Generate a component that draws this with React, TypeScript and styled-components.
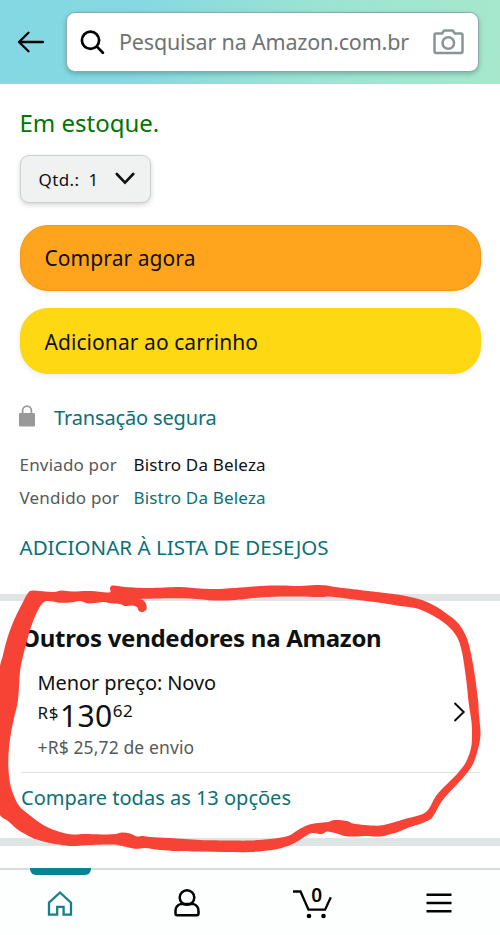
import React from 'react';
import styled, { createGlobalStyle } from 'styled-components';

const GlobalStyle = createGlobalStyle`
  * { box-sizing: border-box; }
  body { margin: 0; background: #fff; }
  button { font: inherit; border: 0; background: none; padding: 0; color: inherit; }
`;

const teal = '#0b7078';

const Screen = styled.div`
  position: relative;
  width: 500px;
  height: 935px;
  display: flex;
  flex-direction: column;
  overflow: hidden;
  background: #fff;
  color: #0f1111;
  font-family: 'Noto Sans', 'Open Sans', sans-serif;
  svg { display: block; flex: none; }
`;

const Header = styled.header`
  flex: none;
  height: 83.5px;
  display: flex;
  align-items: flex-start;
  padding: 12px 21.5px 0 17px;
  background: linear-gradient(100deg, #84d8e3 0%, #86d9e2 28%, #9be4d3 62%, #a7e8cd 100%);
`;

const BackButton = styled.button`
  display: flex;
  margin: 18px 21px 0 0;
`;

const SearchBox = styled.div`
  flex: 1;
  height: 60px;
  display: flex;
  align-items: center;
  padding: 0 14px 0 13px;
  border: 1px solid #8aa9ab;
  border-radius: 9px;
  background: #fff;
  box-shadow: 0 2px 5px rgba(15, 60, 60, 0.3);
`;

const SearchHint = styled.span`
  flex: 1;
  margin-left: 13px;
  font-size: 21.5px;
  line-height: 30px;
  letter-spacing: -0.18px;
  white-space: nowrap;
  color: #707373;
`;

const Purchase = styled.section`
  flex: none;
  height: 510.5px;
  padding: 24px 19.5px 0;
`;

const Stock = styled.p`
  margin: 0 0 17px;
  font-size: 24px;
  line-height: 30px;
  color: #007600;
`;

const Quantity = styled.button`
  width: 131.5px;
  height: 48.5px;
  display: flex;
  align-items: center;
  gap: 9px;
  padding: 1px 15.5px 0 18px;
  border: 1.5px solid #cdd0d0;
  border-radius: 9px;
  background: #f0f2f2;
  box-shadow: 0 2px 5px rgba(15, 17, 17, 0.18);
  font-size: 17px;
  letter-spacing: 0.4px;
  svg { margin: -1px 0 0 auto; }
`;

const Actions = styled.div`
  display: flex;
  flex-direction: column;
  gap: 17.5px;
  margin-top: 21.5px;
`;

const ActionButton = styled.button<{ $fill: string; $edge: string }>`
  height: 66px;
  padding: 1px 24px 0;
  text-align: left;
  border: 1.5px solid ${(p) => p.$edge};
  border-radius: 28px;
  background: ${(p) => p.$fill};
  box-shadow: 0 2px 5px rgba(213, 217, 217, 0.5);
  font-size: 21px;
  letter-spacing: 0.07px;
`;

const Secure = styled.div`
  display: flex;
  align-items: center;
  gap: 18px;
  height: 30px;
  margin-top: 28.5px;
  color: ${teal};
  font-size: 20px;
  letter-spacing: -0.15px;
  svg { margin: -3px 0 0 -0.5px; }
`;

const Facts = styled.dl`
  display: grid;
  grid-template-columns: 114px auto;
  grid-auto-rows: 33.2px;
  margin: 15.5px 0 0;
  font-size: 17px;
  line-height: 33px;
  letter-spacing: 0.18px;
`;

const FactName = styled.dt`
  color: #565959;
`;

const FactValue = styled.dd<{ $link?: boolean }>`
  margin: 0;
  color: ${(p) => (p.$link ? teal : '#0f1111')};
`;

const WishLink = styled.div`
  margin-top: 17.5px;
  font-size: 20.5px;
  line-height: 30px;
  letter-spacing: 0.03px;
  color: ${teal};
`;

const Divider = styled.div<{ $size: number }>`
  flex: none;
  height: ${(p) => p.$size}px;
  background: #e1e4e5;
`;

const Sellers = styled.section`
  flex: none;
  height: 237px;
  padding: 20.5px 20.5px 0 21px;
`;

const SellersTitle = styled.h2`
  margin: 0;
  font-size: 24px;
  font-weight: 700;
  line-height: 32px;
  letter-spacing: -0.27px;
`;

const Offer = styled.div`
  display: flex;
  align-items: center;
  justify-content: space-between;
  height: 119px;
  padding: 0 13.5px 0 16.5px;
  border-bottom: 1.5px solid #dfe2e2;
  svg { margin-top: -2px; }
`;

const OfferText = styled.div`
  display: flex;
  flex-direction: column;
  margin-top: 6px;
`;

const Condition = styled.span`
  font-size: 20px;
  line-height: 30px;
  letter-spacing: -0.1px;
`;

const Price = styled.span`
  display: flex;
  align-items: flex-start;
  height: 33px;
`;

const PriceSmall = styled.span<{ $raised?: boolean }>`
  font-size: 17px;
  line-height: ${(p) => (p.$raised ? 26 : 30)}px;
  letter-spacing: 0.6px;
`;

const PriceWhole = styled.span`
  margin-left: 1px;
  font-size: 30px;
  line-height: 35px;
  letter-spacing: 0.4px;
`;

const Shipping = styled.span`
  font-size: 17.5px;
  line-height: 33px;
  letter-spacing: 0.12px;
  color: #565959;
`;

const CompareLink = styled.div`
  margin-top: 10.5px;
  font-size: 20px;
  line-height: 30px;
  color: ${teal};
`;

const TabBar = styled.nav`
  flex: none;
  height: 67px;
  margin-top: auto;
  display: grid;
  grid-template-columns: 120.5px 133px 116px 1fr;
  border-top: 2px solid #d9dcdc;
  background: #fdfefe;
`;

const Tab = styled.button<{ $active?: boolean }>`
  display: flex;
  flex-direction: column;
  align-items: center;
  justify-content: flex-start;
  color: ${(p) => (p.$active ? '#15808c' : '#000')};
  &::before {
    content: '';
    width: 61.5px;
    height: 7px;
    margin: -2px 0 7px;
    border-radius: 0 0 6px 6px;
    background: ${(p) => (p.$active ? '#078296' : 'transparent')};
  }
  &:last-child { padding-left: 9px; }
`;

const CartCount = styled.text`
  font: 600 19px 'Noto Sans', sans-serif;
`;

const Marker = styled.svg`
  position: absolute;
  inset: 0;
  pointer-events: none;
`;

type Point = [number, number];

const markerOuter: Point[] = [
  [33, 590.5], [28, 593], [23, 602], [15, 618], [8, 636], [3, 655], [-1, 675], [-4, 740], [-3, 800], [0, 815],
  [8, 821], [17, 829], [25, 834], [35, 839], [50, 843], [62, 845], [73, 846], [90, 845], [112, 844.5],
  [120, 845.5], [135, 848.7], [145, 848], [160, 850], [175, 851], [200, 851.5], [225, 852], [250, 852],
  [272, 850], [288, 846], [298, 841], [305, 836.5], [312, 833], [322, 834], [327, 831.5], [335, 833],
  [345, 836], [355, 836.5], [367, 836], [375, 836.5], [384, 836], [391, 834], [398, 832], [410, 827],
  [420, 824], [430, 819.5], [434, 815], [440, 804], [446, 796], [453, 788.5], [461, 780], [470, 769],
  [475, 759], [479, 745], [480.5, 733], [479, 715], [478, 700], [474, 670], [469, 645], [464, 632],
  [457, 622], [447, 614], [435, 606], [422, 600], [408, 596.5], [400, 595], [385, 593], [360, 590],
  [335, 587], [327, 585.5], [315, 585], [300, 586], [280, 585.5], [260, 586], [235, 588], [215, 589],
  [200, 588.5], [180, 587], [150, 588], [125, 587], [113, 585.5], [110, 588], [109, 592.5], [90, 591],
  [72, 591.5], [62, 590.5], [54, 592], [45, 591.5],
];

const markerInner: Point[] = [
  [44, 602], [53, 601.5], [59, 602.7], [70, 602.5], [80, 601], [87, 603.3], [95, 603], [103, 602],
  [113, 603.5], [120, 604], [125, 606], [132, 605.5], [137, 607], [139, 611], [143, 612], [146.5, 609],
  [146, 604], [143, 600], [139, 599], [160, 598.5], [190, 598.5], [215, 600.5], [235, 600], [260, 597.5],
  [285, 596.5], [320, 597], [330, 596.5], [350, 599], [375, 602], [400, 606], [415, 608], [425, 611.5],
  [437, 618], [448, 626], [457, 637], [462, 652], [466, 678], [469, 705], [471.5, 722], [472, 735],
  [471, 748], [466, 762], [457, 774], [445, 786], [436, 796], [430, 807], [426, 812], [420, 815],
  [405, 819], [395, 822], [380, 825.5], [365, 825], [353, 823.5], [347, 821], [335, 820], [328, 822],
  [318, 823], [308, 825], [298, 830], [288, 836], [270, 839], [250, 840.5], [230, 840.5], [200, 840],
  [170, 838], [150, 837], [143, 836], [137, 836.5], [130, 833.5], [122, 832.5], [115, 834], [105, 834.5],
  [85, 834], [73, 834.5], [60, 832], [45, 826], [32, 817], [20, 807], [14, 796], [10, 783], [8.3, 765],
  [9, 748], [11, 733], [14, 718], [18, 700], [20, 672], [23, 656], [27, 641], [31, 627], [37, 612],
];

function smoothPath(points: Point[]) {
  const n = points.length;
  const at = (i: number) => points[(i + n) % n];
  let d = `M${at(0)[0]} ${at(0)[1]}`;
  for (let i = 0; i < n; i++) {
    const [a, b, c, e] = [at(i - 1), at(i), at(i + 1), at(i + 2)];
    d += `C${b[0] + (c[0] - a[0]) / 6} ${b[1] + (c[1] - a[1]) / 6} ${c[0] - (e[0] - b[0]) / 6} ${c[1] - (e[1] - b[1]) / 6} ${c[0]} ${c[1]}`;
  }
  return d + 'Z';
}

const BackIcon = () => (
  <svg width="28" height="24" viewBox="0 0 28 24" fill="none" stroke="#000" strokeWidth="2.3" strokeLinecap="round" strokeLinejoin="round">
    <path d="M26 12H2M11.5 2.7L2 12l9.5 9.3" />
  </svg>
);

const SearchIcon = () => (
  <svg width="26" height="26" viewBox="0 0 26 26" fill="none" stroke="#000" strokeWidth="2.7" strokeLinecap="round">
    <circle cx="10.5" cy="11.3" r="8.6" />
    <path d="M17.1 17.9L22.9 23.7" />
  </svg>
);

const CameraIcon = () => (
  <svg width="31" height="26" viewBox="0 0 31 26" fill="none" stroke="#899597" strokeWidth="2.5" strokeLinejoin="round">
    <path d="M3 4.4h6.2l1.5-2.4q.3-.5 1-.5h7.4q.7 0 1 .5l1.5 2.4H28q1.5 0 1.5 1.5v16.3q0 1.7-1.5 1.7H3q-1.5 0-1.5-1.7V5.9q0-1.5 1.5-1.5z" />
    <circle cx="15.3" cy="14" r="5.8" />
  </svg>
);

const LockIcon = () => (
  <svg width="17" height="22" viewBox="0 0 17 22" fill="none">
    <path d="M3.6 10V5.5a4.4 4.4 0 0 1 8.8 0V10" stroke="#999" strokeWidth="1.7" />
    <rect x="0" y="8" width="16" height="13.5" rx="1.3" fill="#999" />
  </svg>
);

const HomeIcon = () => (
  <svg width="28" height="42" viewBox="0 -7.4 28 42" fill="none" stroke="currentColor" strokeWidth="2.3">
    <path d="M3 13.3L14 3.1l11 10.2V25.3h-7.4v-7.9h-6.4v7.9H3z" />
  </svg>
);

const PersonIcon = () => (
  <svg width="28" height="42" viewBox="0 -6.5 28 42" fill="none" stroke="currentColor" strokeWidth="2.5">
    <circle cx="14" cy="9" r="7.3" />
    <path d="M8 15.4Q2.5 17 2.5 22.5V25q0 1.8 1.7 1.8h19.6q1.7 0 1.7-1.8v-2.5q0-5.5-5.5-7.1z" strokeLinejoin="round" />
  </svg>
);

const CartIcon = () => (
  <svg width="42" height="42" viewBox="0 -4.5 42 42" fill="none" stroke="currentColor" strokeWidth="2.3">
    <path d="M2 5h7.5l8 18.2h16.6L39.8 10.8" />
    <circle cx="18" cy="29.5" r="2.3" fill="currentColor" stroke="none" />
    <circle cx="32.5" cy="29.5" r="2.3" fill="currentColor" stroke="none" />
    <CartCount x="25.7" y="15.2" textAnchor="middle" fill="currentColor" stroke="none">0</CartCount>
  </svg>
);

const MenuIcon = () => (
  <svg width="26" height="42" viewBox="0 -5.5 26 42" stroke="currentColor" strokeWidth="2.5">
    <path d="M.5 7.2h25M.5 15.5h25M.5 23.8h25" />
  </svg>
);

export default function App() {
  return (
    <>
      <GlobalStyle />
      <Screen>
        <Header>
          <BackButton aria-label="Voltar"><BackIcon /></BackButton>
          <SearchBox>
            <SearchIcon />
            <SearchHint>Pesquisar na Amazon.com.br</SearchHint>
            <CameraIcon />
          </SearchBox>
        </Header>

        <Purchase>
          <Stock>Em estoque.</Stock>
          <Quantity>
            <span>Qtd.:</span>
            <span>1</span>
            <svg width="20" height="13" viewBox="0 0 20 13" fill="none" stroke="#0f1111" strokeWidth="2.6" strokeLinecap="round">
              <path d="M1.8 2L10 10.7 18.2 2" />
            </svg>
          </Quantity>
          <Actions>
            <ActionButton $fill="#ffa41c" $edge="#f79618">Comprar agora</ActionButton>
            <ActionButton $fill="#ffd814" $edge="#fcd612">Adicionar ao carrinho</ActionButton>
          </Actions>
          <Secure><LockIcon /><span>Transação segura</span></Secure>
          <Facts>
            <FactName>Enviado por</FactName>
            <FactValue>Bistro Da Beleza</FactValue>
            <FactName>Vendido por</FactName>
            <FactValue $link>Bistro Da Beleza</FactValue>
          </Facts>
          <WishLink>ADICIONAR À LISTA DE DESEJOS</WishLink>
        </Purchase>

        <Divider $size={7} />

        <Sellers>
          <SellersTitle>Outros vendedores na Amazon</SellersTitle>
          <Offer>
            <OfferText>
              <Condition>Menor preço: Novo</Condition>
              <Price>
                <PriceSmall>R$</PriceSmall>
                <PriceWhole>130</PriceWhole>
                <PriceSmall $raised>62</PriceSmall>
              </Price>
              <Shipping>+R$ 25,72 de envio</Shipping>
            </OfferText>
            <svg width="13" height="20" viewBox="0 0 13 20" fill="none" stroke="#0f1111" strokeWidth="2">
              <path d="M1.5 1l9.2 9-9.2 9" />
            </svg>
          </Offer>
          <CompareLink>Compare todas as 13 opções</CompareLink>
        </Sellers>

        <Divider $size={8} />

        <TabBar>
          <Tab $active aria-label="Início"><HomeIcon /></Tab>
          <Tab aria-label="Conta"><PersonIcon /></Tab>
          <Tab aria-label="Carrinho"><CartIcon /></Tab>
          <Tab aria-label="Menu"><MenuIcon /></Tab>
        </TabBar>

        <Marker width="500" height="935" viewBox="0 0 500 935" aria-hidden="true">
          <path d={smoothPath(markerOuter) + smoothPath(markerInner)} fill="#f74236" fillRule="evenodd" />
        </Marker>
      </Screen>
    </>
  );
}
